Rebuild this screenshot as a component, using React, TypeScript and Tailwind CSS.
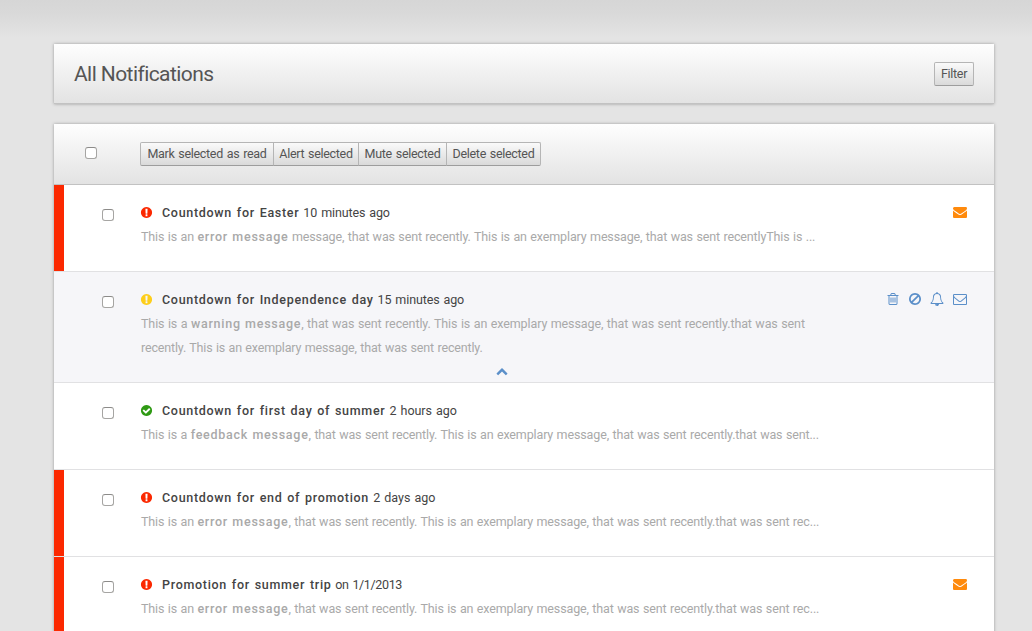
import type { ReactNode } from 'react';

const PATHS = {
  trash:
    'M704 736v576q0 14-9 23t-23 9h-64q-14 0-23-9t-9-23v-576q0-14 9-23t23-9h64q14 0 23 9t9 23zm256 0v576q0 14-9 23t-23 9h-64q-14 0-23-9t-9-23v-576q0-14 9-23t23-9h64q14 0 23 9t9 23zm256 0v576q0 14-9 23t-23 9h-64q-14 0-23-9t-9-23v-576q0-14 9-23t23-9h64q14 0 23 9t9 23zm128 724v-948h-896v948q0 22 7 40.5t14.5 27 10.5 8.5h832q3 0 10.5-8.5t14.5-27 7-40.5zm-672-1076h448l-48-117q-7-9-17-11h-317q-10 2-17 11zm928 32v64q0 14-9 23t-23 9h-96v948q0 83-47 143.5t-113 60.5h-832q-66 0-113-58.5t-47-141.5v-952h-96q-14 0-23-9t-9-23v-64q0-14 9-23t23-9h309l70-167q15-37 54-63t79-26h320q40 0 79 26t54 63l70 167h309q14 0 23 9t9 23z',
  ban: 'M1440 893q0-161-87-295l-754 753q137 89 297 89 111 0 211.5-43.5t173.5-116.5 116-174.5 43-212.5zm-999 299l755-754q-135-91-300-91-148 0-273 73t-198 199-73 274q0 162 89 299zm1223-299q0 157-61 300t-163.5 246-245 164-298.5 61-298.5-61-245-164-163.5-246-61-300 61-299.5 163.5-245.5 245-164 298.5-61 298.5 61 245 164 163.5 245.5 61 299.5z',
  bell: 'M912 1696q0-16-16-16-59 0-101.5-42.5t-42.5-101.5q0-16-16-16t-16 16q0 73 51.5 124.5t124.5 51.5q16 0 16-16zm-666-288h1300q-266-300-266-832 0-51-24-105t-69-103-121.5-80.5-169.5-31.5-169.5 31.5-121.5 80.5-69 103-24 105q0 532-266 832zm1482 0q0 52-38 90t-90 38h-448q0 106-75 181t-181 75-181-75-75-181h-448q-52 0-90-38t-38-90q50-42 91-88t85-119.5 74.5-158.5 50-206 19.5-260q0-152 117-282.5t307-158.5q-8-19-8-39 0-40 28-68t68-28 68 28 28 68q0 20-8 39 190 28 307 158.5t117 282.5q0 139 19.5 260t50 206 74.5 158.5 85 119.5 91 88z',
  envelopeOpen:
    'M1664 1504v-768q-32 36-69 66-268 206-426 338-51 43-83 67t-86.5 48.5-102.5 24.5h-2q-48 0-102.5-24.5t-86.5-48.5-83-67q-158-132-426-338-37-30-69-66v768q0 13 9.5 22.5t22.5 9.5h1472q13 0 22.5-9.5t9.5-22.5zm0-1051v-24.5l-.5-13-3-12.5-5.5-9-9-7.5-14-2.5h-1472q-13 0-22.5 9.5t-9.5 22.5q0 168 147 284 193 152 401 317 6 5 35 29.5t46 37.5 44.5 31.5 50.5 27.5 43 9h2q20 0 43-9t50.5-27.5 44.5-31.5 46-37.5 35-29.5q208-165 401-317 54-43 100.5-115.5t46.5-131.5zm128-37v1088q0 66-47 113t-113 47h-1472q-66 0-113-47t-47-113v-1088q0-66 47-113t113-47h1472q66 0 113 47t47 113z',
  envelope:
    'M1792 710v794q0 66-47 113t-113 47h-1472q-66 0-113-47t-47-113v-794q44 49 101 87 362 246 497 345 57 42 92.5 65.5t94.5 48 110 24.5h2q51 0 110-24.5t94.5-48 92.5-65.5q170-123 498-345 57-39 100-87zm0-294q0 79-49 151t-122 123q-376 261-468 325-10 7-42.5 31t-54 38.5-52 32.5-57.5 27-50 9h-2q-23 0-50-9t-57.5-27-52-32.5-54-38.5-42.5-31q-91-64-262-182.5t-205-142.5q-62-42-117-115.5t-55-136.5q0-78 41.5-130t118.5-52h1472q65 0 112.5 47t47.5 113z',
  exclamation:
    'M896 128q209 0 385.5 103t279.5 279.5 103 385.5-103 385.5-279.5 279.5-385.5 103-385.5-103-279.5-279.5-103-385.5 103-385.5 279.5-279.5 385.5-103zm128 1247v-190q0-14-9-23.5t-22-9.5h-192q-13 0-23 10t-10 23v190q0 13 10 23t23 10h192q13 0 22-9.5t9-23.5zm-2-344l18-621q0-12-10-18-10-8-24-8h-220q-14 0-24 8-10 6-10 18l17 621q0 10 10 17.5t24 7.5h185q14 0 23.5-7.5t10.5-17.5z',
  check:
    'M1412 734q0-28-18-46l-91-90q-19-19-45-19t-45 19l-408 407-226-226q-19-19-45-19t-45 19l-91 90q-18 18-18 46 0 27 18 45l362 362q19 19 45 19 27 0 46-19l543-543q18-18 18-45zm252 162q0 209-103 385.5t-279.5 279.5-385.5 103-385.5-103-279.5-279.5-103-385.5 103-385.5 279.5-279.5 385.5-103 385.5 103 279.5 279.5 103 385.5z',
  chevronUp:
    'M1683 1331l-166 165q-19 19-45 19t-45-19l-531-531-531 531q-19 19-45 19t-45-19l-166-165q-19-19-19-45.5t19-45.5l742-741q19-19 45-19t45 19l742 741q19 19 19 45.5t-19 45.5z',
};

function Icon({ name, className }: { name: keyof typeof PATHS; className: string }) {
  return (
    <svg viewBox="0 0 1792 1792" fill="currentColor" aria-hidden="true" className={`shrink-0 ${className}`}>
      <path d={PATHS[name]} />
    </svg>
  );
}

function Checkbox({ className, label }: { className: string; label: string }) {
  return (
    <input
      type="checkbox"
      aria-label={label}
      className={`size-3 shrink-0 appearance-none rounded-[3px] border border-[#a6a5a3] border-t-[#8c8b89] bg-white ${className}`}
    />
  );
}

function Button({ children, className }: { children: ReactNode; className: string }) {
  return (
    <button
      className={`h-6 shrink-0 border border-[#b5b5b5] border-b-[#9d9d9d] bg-linear-to-b from-[#fafafa] to-[#dadada] text-center text-[12.5px] leading-[22px] tracking-[-0.3px] whitespace-nowrap text-[#555] [word-spacing:1px] ${className}`}
    >
      {children}
    </button>
  );
}

type Item = {
  kind: 'error' | 'warning' | 'success';
  title: string;
  time: string;
  timeClass?: string;
  lines: { lead?: string; strong?: string; rest: string; className?: string }[];
  bar?: boolean;
  unread?: boolean;
  open?: boolean;
};

const ITEMS: Item[] = [
  {
    kind: 'error',
    title: 'Countdown for Easter',
    time: '10 minutes ago',
    timeClass: 'tracking-[-0.12px]',
    lines: [
      {
        lead: 'This is an ',
        strong: 'error message',
        rest: ' message, that was sent recently. This is an exemplary message, that was sent recentlyThis is ...',
      },
    ],
    bar: true,
    unread: true,
  },
  {
    kind: 'warning',
    title: 'Countdown for Independence day',
    time: '15 minutes ago',
    timeClass: 'tracking-[-0.12px]',
    lines: [
      {
        lead: 'This is a ',
        strong: 'warning message',
        rest: ', that was sent recently. This is an exemplary message, that was sent recently.that was sent',
        className: 'tracking-[-0.1px]',
      },
      {
        rest: 'recently. This is an exemplary message, that was sent recently.',
        className: 'tracking-[-0.16px]',
      },
    ],
    open: true,
  },
  {
    kind: 'success',
    title: 'Countdown for first day of summer',
    time: '2 hours ago',
    timeClass: 'tracking-[-0.05px]',
    lines: [
      {
        lead: 'This is a ',
        strong: 'feedback message',
        rest: ', that was sent recently. This is an exemplary message, that was sent recently.that was sent...',
      },
    ],
  },
  {
    kind: 'error',
    title: 'Countdown for end of promotion',
    time: '2 days ago',
    lines: [
      {
        lead: 'This is an ',
        strong: 'error message',
        rest: ', that was sent recently. This is an exemplary message, that was sent recently.that was sent rec...',
      },
    ],
    bar: true,
  },
  {
    kind: 'error',
    title: 'Promotion for summer trip',
    time: 'on 1/1/2013',
    timeClass: 'tracking-[-0.35px]',
    lines: [
      {
        lead: 'This is an ',
        strong: 'error message',
        rest: ', that was sent recently. This is an exemplary message, that was sent recently.that was sent rec...',
      },
    ],
    bar: true,
    unread: true,
  },
];

const STATUS = {
  error: { icon: 'exclamation', color: 'text-[#fb2800]' },
  warning: { icon: 'exclamation', color: 'text-[#fdce1b]' },
  success: { icon: 'check', color: 'text-[#2f9a14]' },
} as const;

function Row({ item }: { item: Item }) {
  const status = STATUS[item.kind];
  return (
    <li
      className={`flex shrink-0 border-b border-[#e1e1e3] ${item.open ? 'h-[111px] bg-[#f6f6f9]' : 'h-[87px] bg-white'}`}
    >
      <div className={`w-2.5 shrink-0 ${item.bar ? 'bg-[#fb2800]' : ''}`} />
      <Checkbox label={item.title} className="mt-6 ml-[38px]" />
      <div className="ml-[27px] flex w-[721px] shrink-0 flex-col pt-4 whitespace-nowrap">
        <div className="flex h-6 items-center text-[12.5px] text-[#444]">
          <Icon name={status.icon} className={`mr-[9px] mb-px -ml-px size-[13px] ${status.color}`} />
          <p className="[word-spacing:1px]">
            <b className="font-medium tracking-[0.7px]">{item.title}</b>
            <span className={item.timeClass ?? 'tracking-normal'}> {item.time}</span>
          </p>
        </div>
        {item.lines.map((line) => (
          <p
            key={line.rest}
            className={`h-6 text-[12.5px] leading-6 text-[#a9a9a9] [word-spacing:0.5px] ${line.className ?? 'tracking-[-0.13px]'}`}
          >
            {line.lead}
            {line.strong && <b className="font-medium tracking-[0.74px]">{line.strong}</b>}
            {line.rest}
          </p>
        ))}
        {item.open && <Icon name="chevronUp" className="mt-[5px] size-3 self-center text-[#5b8fc9]" />}
      </div>
      <div className="mt-[15px] ml-auto flex h-6 items-center pr-[27px]">
        {item.open && (
          <>
            <Icon name="trash" className="mr-2 size-[14px] text-[#5b8fc9]" />
            <Icon name="ban" className="mr-2 size-[14px] text-[#5b8fc9]" />
            <Icon name="bell" className="mr-[9px] size-[14px] text-[#5b8fc9]" />
            <Icon name="envelopeOpen" className="size-[14px] text-[#5b8fc9]" />
          </>
        )}
        {item.unread && <Icon name="envelope" className="size-[14px] text-[#ff8a0c]" />}
      </div>
    </li>
  );
}

export default function App() {
  return (
    <main className="flex h-[631px] flex-col gap-5 overflow-hidden bg-[#e4e4e4] bg-[linear-gradient(to_bottom,#d6d6d6_0px,#d9d9d9_14px,#e4e4e4_38px)] pt-11 pr-[38px] pl-[54px] font-[Roboto,sans-serif]">
      <header className="flex h-[60px] shrink-0 items-center justify-between border-b border-[#c2c2c2] bg-linear-to-b from-[#fefefe] to-[#e3e3e3] px-5 shadow-[0_0_3px_#999]">
        <h1 className="pt-0.5 text-[21px] tracking-[-0.58px] text-[#555]">All Notifications</h1>
        <Button className="w-10 rounded-[2px]">Filter</Button>
      </header>
      <section className="flex shrink-0 flex-col shadow-[0_0_3px_#999]">
        <div className="flex h-[61px] shrink-0 items-center border-b border-[#c2c2c2] bg-linear-to-b from-[#fefefe] to-[#e3e3e3] pl-[31px]">
          <Checkbox label="Select all" className="mr-[43px] mb-0.5" />
          <Button className="w-[134px] rounded-l-[2px]">Mark selected as read</Button>
          <Button className="-ml-px w-[86px]">Alert selected</Button>
          <Button className="-ml-px w-[89px]">Mute selected</Button>
          <Button className="-ml-px w-[95px] rounded-r-[2px]">Delete selected</Button>
        </div>
        <ul className="flex flex-col">
          {ITEMS.map((item) => (
            <Row key={item.title} item={item} />
          ))}
        </ul>
      </section>
    </main>
  );
}
